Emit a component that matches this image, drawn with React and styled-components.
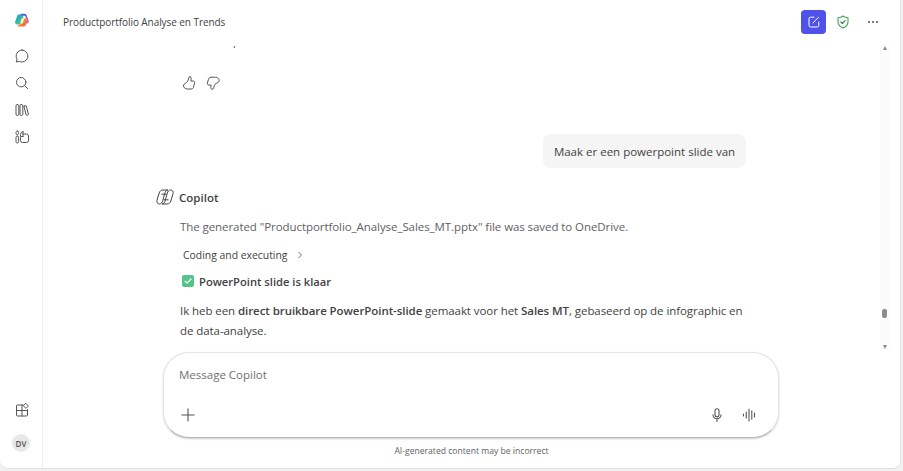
import React from "react";
import styled, { createGlobalStyle } from "styled-components";

const GlobalStyle = createGlobalStyle`
  html, body {
    margin: 0;
    padding: 0;
    background: #f1f1f1;
  }
  * { box-sizing: border-box; }
`;

const Window = styled.div`
  width: 901px;
  height: 469px;
  display: flex;
  background: #ffffff;
  border-radius: 0 0 8px 8px;
  border-right: 1px solid #e6e6e6;
  border-bottom: 1px solid #e0e0e0;
  font-family: "Open Sans", "Noto Sans", sans-serif;
  color: #424242;
  overflow: hidden;
`;

const Sidebar = styled.nav`
  width: 43px;
  flex-shrink: 0;
  border-right: 1px solid #f0f0f0;
  display: flex;
  flex-direction: column;
  align-items: center;
  padding: 12px 0 16px 1px;
`;

const NavGroup = styled.div`
  display: flex;
  flex-direction: column;
  align-items: center;
  gap: 9px;
  margin-top: 19px;
`;

const Spacer = styled.div`
  flex: 1;
`;

const Avatar = styled.div`
  width: 18px;
  height: 18px;
  margin-top: 16px;
  margin-left: -1px;
  border-radius: 50%;
  background: #e8e8e8;
  color: #555;
  font-size: 8px;
  font-weight: 600;
  display: flex;
  align-items: center;
  justify-content: center;
`;

const Main = styled.main`
  flex: 1;
  min-width: 0;
  display: flex;
  flex-direction: column;
`;

const Header = styled.header`
  height: 44px;
  flex-shrink: 0;
  display: flex;
  align-items: center;
  padding: 0 17px 0 20px;
`;

const Title = styled.h1`
  flex: 1;
  margin: 0;
  font-size: 10px;
  letter-spacing: -0.07px;
  font-weight: 400;
  color: #424242;
`;

const HeaderActions = styled.div`
  display: flex;
  align-items: center;
`;

const NewChat = styled.button`
  width: 25px;
  height: 24px;
  padding: 0;
  border: none;
  border-radius: 4px;
  background: #4f52e8;
  display: flex;
  align-items: center;
  justify-content: center;
`;

const IconSlot = styled.span`
  width: ${(props) => props.size || 20}px;
  height: ${(props) => props.size || 20}px;
  display: flex;
  align-items: center;
  justify-content: center;
`;

const ShieldSlot = styled(IconSlot)`
  margin: 0 12px 0 9px;
`;

const Body = styled.div`
  height: 306px;
  flex-shrink: 0;
  display: flex;
`;

const Chat = styled.div`
  flex: 1;
  min-width: 0;
  overflow: hidden;
  padding: 0 0 0 137px;
`;

const ClippedMark = styled.div`
  height: 4px;
  padding-left: 53px;
  font-size: 11px;
  line-height: 0;
  overflow: hidden;
  color: #424242;
`;

const Feedback = styled.div`
  display: flex;
  gap: 8px;
  margin-top: 27px;
  margin-left: 1px;
`;

const UserRow = styled.div`
  display: flex;
  justify-content: flex-end;
  margin-top: 43px;
  width: 566px;
`;

const Bubble = styled.div`
  height: 34px;
  width: 203px;
  display: flex;
  align-items: center;
  justify-content: center;
  background: #f5f5f5;
  border-radius: 8px;
  font-size: 11.5px;
  color: #424242;
`;

const AuthorRow = styled.div`
  display: flex;
  align-items: center;
  gap: 5px;
  margin: 19px 0 0 -24px;
  height: 20px;
`;

const Author = styled.span`
  font-size: 11.5px;
  font-weight: 600;
  color: #424242;
`;

const Muted = styled.p`
  margin: 10px 0 0;
  font-size: 11.5px;
  letter-spacing: -0.07px;
  line-height: 20px;
  color: #616161;
  white-space: nowrap;
`;

const Steps = styled.div`
  display: flex;
  align-items: center;
  gap: 8px;
  margin: 8px 0 0 3px;
  height: 20px;
  font-size: 10.4px;
  font-weight: 500;
  color: #424242;
`;

const Done = styled.div`
  display: flex;
  align-items: center;
  gap: 5px;
  margin: 6px 0 0 2px;
  height: 20px;
  font-size: 11.2px;
  font-weight: 600;
  color: #424242;
`;

const CheckBox = styled.span`
  width: 12px;
  height: 12px;
  border-radius: 2px;
  background: #52c48c;
  display: flex;
  align-items: center;
  justify-content: center;
`;

const Paragraph = styled.p`
  margin: 10px 0 0;
  width: 570px;
  font-size: 11.5px;
  letter-spacing: -0.07px;
  line-height: 20px;
  color: #424242;
  strong { font-weight: 600; }
`;

const Scrollbar = styled.div`
  width: 9px;
  margin-right: 11px;
  background: #fbfbfb;
  position: relative;
  display: flex;
  flex-direction: column;
  justify-content: space-between;
  align-items: center;
  padding: 2px 0 1px;
`;

const Arrow = styled.span`
  width: 0;
  height: 0;
  border-left: 2.5px solid transparent;
  border-right: 2.5px solid transparent;
  ${(props) =>
    props.up
      ? "border-bottom: 4px solid #8a8a8a;"
      : "border-top: 4px solid #8a8a8a;"}
`;

const Thumb = styled.span`
  position: absolute;
  left: 2px;
  top: 265px;
  width: 5px;
  height: 9px;
  border-radius: 2px;
  background: #8c8c8c;
`;

const Composer = styled.div`
  width: 616px;
  height: 86px;
  flex-shrink: 0;
  margin: 2px 0 0 120px;
  background: #fff;
  border: 1px solid #e4e4e4;
  border-bottom-color: #b8b8b8;
  border-radius: 26px;
  box-shadow: 0 1px 2px rgba(0, 0, 0, 0.2);
  padding: 14px 20px 14px 15px;
  display: flex;
  flex-direction: column;
  justify-content: space-between;
`;

const Placeholder = styled.div`
  font-size: 11.5px;
  line-height: 16px;
  color: #707070;
`;

const ComposerBar = styled.div`
  display: flex;
  align-items: center;
  justify-content: space-between;
  padding-left: 1px;
`;

const ComposerTools = styled.div`
  display: flex;
  align-items: center;
  gap: 17px;
`;

const Disclaimer = styled.div`
  margin-top: 7px;
  text-align: center;
  font-size: 8.6px;
  line-height: 12px;
  color: #616161;
`;

const stroke = { fill: "none", stroke: "#555", strokeWidth: 1, strokeLinecap: "round", strokeLinejoin: "round" };

const Logo = () => (
  <svg width="16" height="16" viewBox="0 0 16 16">
    <defs>
      <linearGradient id="lgA" x1="0" y1="0" x2="1" y2="1">
        <stop offset="0" stopColor="#1f8fe0" />
        <stop offset="0.55" stopColor="#2fc4a0" />
        <stop offset="1" stopColor="#a6d63c" />
      </linearGradient>
      <linearGradient id="lgB" x1="0" y1="0" x2="0" y2="1">
        <stop offset="0" stopColor="#3a5be8" />
        <stop offset="1" stopColor="#e85fc0" />
      </linearGradient>
      <linearGradient id="lgC" x1="0" y1="0" x2="1" y2="1">
        <stop offset="0" stopColor="#f7b733" />
        <stop offset="1" stopColor="#f0503c" />
      </linearGradient>
    </defs>
    <path d="M5 2.500h5l-2.600 8C7 12 6 12.500 4.500 12.500H3.300C1.800 12.500.7 11 1.200 9.600L3 4.500C3.300 3.300 4 2.500 5 2.500z" fill="url(#lgA)" />
    <path d="M7 1.800h3.600c1 0 1.800.7 2.100 1.700l2 5.200c.4 1.400-.6 2.800-2 2.800h-2.200L12 5.500C11.600 4.200 10.600 3.500 9.500 3.500H6.500z" fill="url(#lgB)" />
    <path d="M7.500 6.500h5c.8 0 1.400.5 1.200 1.200l-1.700 4.800c-.4 1.200-1.300 2-2.600 2H5c-1 0-1.500-.6-1.200-1.300 1.800 0 2.500-.6 2.800-1.700z" fill="url(#lgC)" />
    <path d="M7.700 6.800h2.300L8.600 11.600H6.300z" fill="#fff" />
  </svg>
);

const ChatIcon = () => (
  <svg width="16" height="16" viewBox="0 0 16 16" {...stroke}>
    <path d="M8 2a6 6 0 1 1-2.700 11.400L2.300 14l.7-2.900A6 6 0 0 1 8 2z" />
  </svg>
);

const SearchIcon = () => (
  <svg width="16" height="16" viewBox="0 0 16 16" {...stroke}>
    <circle cx="7.200" cy="7.200" r="4.700" />
    <path d="M10.700 10.700l3 3" />
  </svg>
);

const LibraryIcon = () => (
  <svg width="16" height="16" viewBox="0 0 16 16" {...stroke}>
    <rect x="2" y="2.500" width="2.800" height="11" rx="1.300" />
    <rect x="6" y="2.500" width="2.800" height="11" rx="1.300" />
    <path d="M10 4.200l1.500-.6c.4-.1.600 0 .8.400l2 8c.1.500 0 .8-.4 1l-.8.300c-.5.100-.8 0-1-.5l-2-7.800c-.1-.4 0-.6.300-.7z" />
  </svg>
);

const CreateIcon = () => (
  <svg width="16" height="16" viewBox="0 0 16 16" {...stroke}>
    <rect x="2" y="2" width="2.600" height="3.600" rx="1.300" />
    <rect x="2" y="7" width="2.600" height="7" rx="1.300" />
    <path d="M9 2.500a3 3 0 0 0-2.500 3v2h2.500" />
    <path d="M9 5h3.500a2 2 0 0 1 2 2v4.500a2 2 0 0 1-2 2H8.500a2 2 0 0 1-2-2V8.500" />
    <path d="M9 2.500v5" />
  </svg>
);

const AppsIcon = () => (
  <svg width="16" height="16" viewBox="0 0 16 16" {...stroke}>
    <path d="M9 3H3.500a1 1 0 0 0-1 1v9a1 1 0 0 0 1 1H12.500a1 1 0 0 0 1-1V7.500" />
    <path d="M2.500 8.500h11M8 3V14" />
    <path d="M12 1.600l2.400 2.400L12 6.400 9.600 4z" />
  </svg>
);

const ThumbUp = () => (
  <svg width="16" height="16" viewBox="0 0 16 16" {...stroke}>
    <path d="M9 1.800c.9 0 1.300.7 1.200 1.700L9.900 6h2.400c1 0 1.600.9 1.300 1.900l-1.100 4.200c-.3 1.100-1.100 1.900-2.400 1.900H6.500c-1.200 0-2-.4-3-1.200-1.200-1-1.300-2.600-.4-3.600.7-.7 2-1 3-2.300C7.200 5.500 7.400 4.500 7.700 3c.2-.800.6-1.200 1.300-1.200z" />
  </svg>
);

const ThumbDown = () => (
  <svg width="16" height="16" viewBox="0 0 16 16" {...stroke}>
    <path d="M7 14.200c-.9 0-1.300-.7-1.200-1.700l.3-2.500H3.700c-1 0-1.600-.9-1.300-1.900l1-3.600C3.700 3.200 4.500 2.200 6 2.200h3.500c1.800 0 3 .3 3.900 1.200 1 1 1 2.800.1 3.700-.8.800-2.300.9-3.400 2-.9 1-1 2-1.300 3.800-.2.800-.6 1.300-1.300 1.300z" />
  </svg>
);

const CopilotMark = () => (
  <svg width="18" height="18" viewBox="0 0 18 18" fill="none" stroke="#424242" strokeWidth="1" strokeLinejoin="round">
    <path d="M7 2h5c-1.600.3-2.600 1.300-3 2.800l-2.300 8c-.5 1.900-1.700 3.200-3.300 3.200-1.900 0-3-1.700-2.500-3.500L3.200 5C3.700 3.200 5 2 7 2z" />
    <path d="M11 16H6c1.600-.3 2.600-1.300 3-2.800l2.300-8C11.800 3.300 13 2 14.600 2c1.900 0 3 1.700 2.500 3.500L14.800 13c-.5 1.800-1.800 3-3.800 3z" />
    <path d="M5.500 6.200h5M7.500 11.800h5" />
  </svg>
);

const Chevron = () => (
  <svg width="8" height="8" viewBox="0 0 8 8" fill="none" stroke="#666" strokeWidth="0.9">
    <path d="M2.500 1l3 3-3 3" />
  </svg>
);

const Mic = () => (
  <svg width="16" height="16" viewBox="0 0 16 16" {...stroke}>
    <rect x="6" y="1.800" width="4" height="8" rx="2" strokeWidth="1.100" />
    <path d="M4 7.800a4 4 0 0 0 8 0M8 12v2.500" strokeWidth="1.100" />
  </svg>
);

const Voice = () => (
  <svg width="16" height="16" viewBox="0 0 16 16" {...stroke}>
    <path d="M1.500 7v2M4.300 5v6M7 2v12M9.800 3.800v8.400M12.500 6v4" strokeWidth="1.100" />
  </svg>
);

const Plus = () => (
  <svg width="16" height="16" viewBox="0 0 16 16" fill="none" stroke="#555" strokeWidth="1.100">
    <path d="M8 1.500v13M1.500 8h13" />
  </svg>
);

const Edit = () => (
  <svg width="14" height="14" viewBox="0 0 14 14" fill="none" stroke="#fff" strokeWidth="1" strokeLinecap="round">
    <path d="M7 2.200H3.500a1.500 1.500 0 0 0-1.500 1.500v6.800a1.500 1.500 0 0 0 1.500 1.500h6.800a1.500 1.500 0 0 0 1.500-1.500V7" />
    <path d="M6 8l5.500-5.800" />
  </svg>
);

const Shield = () => (
  <svg width="14" height="14" viewBox="0 0 14 14" fill="none" stroke="#3aa655" strokeWidth="1.100" strokeLinejoin="round" strokeLinecap="round">
    <path d="M7 1c1.500 1.100 3 1.600 5 1.800v4c0 3-2 5-5 6.200-3-1.200-5-3.200-5-6.200v-4C4 2.600 5.500 2.100 7 1z" />
    <path d="M4.800 7l1.600 1.500 2.800-2.800" stroke="#2f7d46" />
  </svg>
);

const Dots = () => (
  <svg width="12" height="4" viewBox="0 0 12 4" fill="#555">
    <circle cx="2" cy="2" r="1" />
    <circle cx="6" cy="2" r="1" />
    <circle cx="10" cy="2" r="1" />
  </svg>
);

const Tick = () => (
  <svg width="10" height="10" viewBox="0 0 10 10" fill="none" stroke="#fff" strokeWidth="1.200" strokeLinecap="round" strokeLinejoin="round">
    <path d="M2 5.200l2 2 4-4.200" />
  </svg>
);

export default function App() {
  return (
    <>
      <GlobalStyle />
      <Window>
        <Sidebar>
          <IconSlot size={16}><Logo /></IconSlot>
          <NavGroup>
            <IconSlot size={18}><ChatIcon /></IconSlot>
            <IconSlot size={18}><SearchIcon /></IconSlot>
            <IconSlot size={18}><LibraryIcon /></IconSlot>
            <IconSlot size={18}><CreateIcon /></IconSlot>
          </NavGroup>
          <Spacer />
          <IconSlot size={16}><AppsIcon /></IconSlot>
          <Avatar>DV</Avatar>
        </Sidebar>
        <Main>
          <Header>
            <Title>Productportfolio Analyse en Trends</Title>
            <HeaderActions>
              <NewChat aria-label="Nieuwe chat"><Edit /></NewChat>
              <ShieldSlot size={16}><Shield /></ShieldSlot>
              <IconSlot size={20}><Dots /></IconSlot>
            </HeaderActions>
          </Header>
          <Body>
            <Chat>
              <ClippedMark>,</ClippedMark>
              <Feedback>
                <ThumbUp />
                <ThumbDown />
              </Feedback>
              <UserRow>
                <Bubble>Maak er een powerpoint slide van</Bubble>
              </UserRow>
              <AuthorRow>
                <CopilotMark />
                <Author>Copilot</Author>
              </AuthorRow>
              <Muted>The generated "Productportfolio_Analyse_Sales_MT.pptx" file was saved to OneDrive.</Muted>
              <Steps>
                Coding and executing
                <Chevron />
              </Steps>
              <Done>
                <CheckBox><Tick /></CheckBox>
                PowerPoint slide is klaar
              </Done>
              <Paragraph>
                Ik heb een <strong>direct bruikbare PowerPoint-slide</strong> gemaakt voor het <strong>Sales MT</strong>, gebaseerd op de infographic en de data-analyse.
              </Paragraph>
            </Chat>
            <Scrollbar>
              <Arrow up />
              <Thumb />
              <Arrow />
            </Scrollbar>
          </Body>
          <Composer>
            <Placeholder>Message Copilot</Placeholder>
            <ComposerBar>
              <Plus />
              <ComposerTools>
                <Mic />
                <Voice />
              </ComposerTools>
            </ComposerBar>
          </Composer>
          <Disclaimer>AI-generated content may be incorrect</Disclaimer>
        </Main>
      </Window>
    </>
  );
}
